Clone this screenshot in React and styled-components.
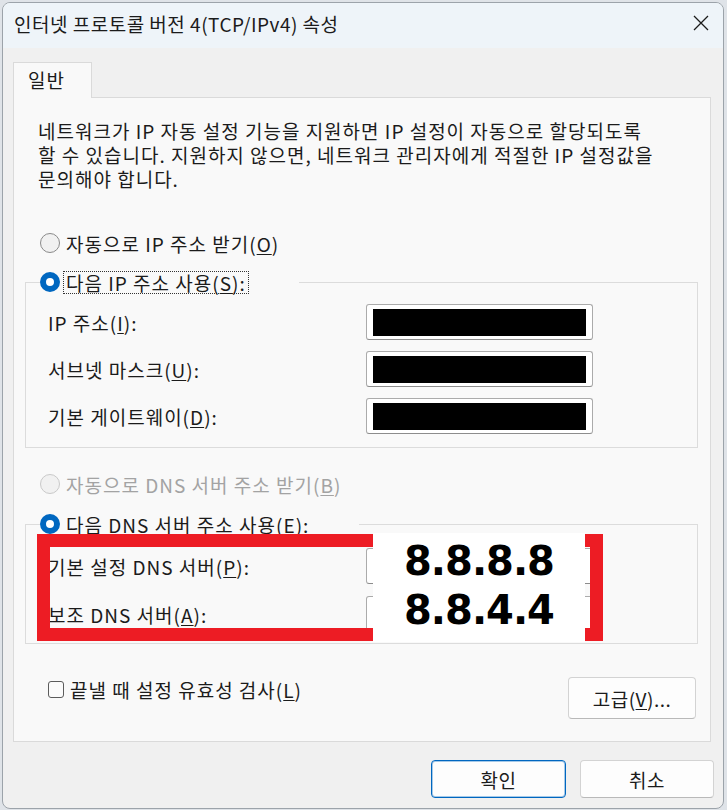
import styled, { createGlobalStyle } from "styled-components";

const GlobalStyle = createGlobalStyle`
  html, body { margin: 0; padding: 0; background: #dfe3e8; }
  body { font-family: "Noto Sans CJK KR", "Noto Sans", sans-serif; color: #1b1b1b; }
  * { box-sizing: border-box; }
  u { text-decoration-thickness: 1px; text-underline-offset: 2px; }
`;

const Window = styled.div`
  margin: 2px 0 0 2px; width: 722px;
  background: #f0f0f0; border: 1px solid #9ca3aa; border-radius: 8px; overflow: hidden;
`;
const TitleBar = styled.div`
  height: 45px; background: #eef4f9;
  display: flex; align-items: center; justify-content: space-between;
  padding: 0 14px 5px 11px;
  font-size: 19px; letter-spacing: 0.5px;
`;
const Body = styled.div`padding: 14px 12px 0 10px;`;
const Tab = styled.div`
  position: relative; z-index: 1;
  width: 79px; height: 36px; margin-bottom: -1px;
  background: #f9f9f9; border: 1px solid #dadada; border-bottom: none;
  padding: 3px 0 0 14px; font-size: 19px; letter-spacing: 1px;
`;
const Panel = styled.div`
  background: #f9f9f9; border: 1px solid #dadada;
  padding: 21px 12px 22px 11px;
  font-size: 19px; letter-spacing: 1px;
`;
const Para = styled.div`padding-left: 13px;`;
const Line = styled.div`height: 24px; line-height: 24px; white-space: nowrap;`;
const OptionRow = styled.div`
  display: flex; align-items: center; gap: 6px;
  height: 24px; margin-top: ${({ $mt }) => $mt}px; padding-left: 15px;
  color: ${({ $disabled }) => ($disabled ? "#a3a3a3" : "inherit")};
`;
const Radio = styled.span`
  flex: none; width: 20px; height: 20px; border-radius: 50%;
  background: ${({ $on }) => ($on ? "#fff" : "#f1f1f1")};
  border: ${({ $on, $disabled }) =>
    $on ? "6px solid #0067c0" : $disabled ? "1px solid #c9c9c9" : "1.5px solid #8a8a8a"};
`;
const Focus = styled.span`
  border: 1px dotted #333; padding: 0 2px; margin-left: -3px; line-height: 21px;
`;
const Group = styled.fieldset`
  margin: ${({ $mt }) => $mt}px 0 0; padding: 0; min-inline-size: 0;
  border: 1px solid #dcdcdc;
`;
const Legend = styled.legend`
  margin-left: 14px; padding: 0 50px 0 0;
  display: flex; align-items: center; gap: 6px; height: 24px;
`;
const FieldGrid = styled.div`
  position: relative;
  display: grid; grid-template-columns: 318px 227px; align-items: center;
  row-gap: ${({ $gap }) => $gap}px;
  padding: ${({ $pt }) => $pt}px 0 ${({ $pb }) => $pb}px 22px;
`;
const Input = styled.div`
  width: 227px; height: 36px; background: #fff;
  border: 1px solid #ababab; border-bottom-color: #8c8c8c; border-radius: 3px;
  padding: 4px 6px 3px 6px;
`;
const Redacted = styled.div`width: 100%; height: 100%; background: #000;`;
const Highlight = styled.div`
  position: absolute; left: 11px; top: -2px; width: 566px; height: 107px;
  border: 13px solid #ed1c24;
`;
const DnsNote = styled.div`
  position: absolute; left: 347px; top: -3px; width: 212px; height: 109px;
  background: #fff; padding-top: 4px; text-align: center;
  font-family: "DejaVu Sans", sans-serif; font-weight: 700; font-size: 40px;
  line-height: 49px; letter-spacing: -1px; color: #000;
`;
const BottomRow = styled.div`
  display: flex; align-items: flex-start; justify-content: space-between;
  margin-top: 33px; padding: 0 2px 0 23px;
`;
const Check = styled.label`display: flex; align-items: center; gap: 6px; margin-top: -1px;`;
const Box = styled.span`
  width: 16px; height: 17px; border: 1px solid #5c5c5c; border-radius: 3px; background: #fbfbfb;
`;
const Button = styled.button`
  width: ${({ $w }) => $w}px; height: ${({ $h = 38 }) => $h}px;
  font-family: inherit; font-size: 19px; color: #1b1b1b; letter-spacing: 0.5px;
  background: #fdfdfd; border-radius: 4px; padding: 0;
  border: 1px solid ${({ $primary }) => ($primary ? "#0067c0" : "#d3d3d3")};
  border-bottom-color: ${({ $primary }) => ($primary ? "#0067c0" : "#b9b9b9")};
  box-shadow: ${({ $primary }) => ($primary ? "inset 0 0 0 1px rgba(0,103,192,0.35)" : "none")};
`;
const Footer = styled.div`
  display: flex; justify-content: flex-end; gap: 14px;
  padding: 18px 9px 10px;
`;

export default function App() {
  return (
    <>
      <GlobalStyle />
      <Window>
        <TitleBar>
          <span>인터넷 프로토콜 버전 4(TCP/IPv4) 속성</span>
          <svg width="16" height="16" viewBox="0 0 16 16">
            <path d="M1 1 L15 15 M15 1 L1 15" stroke="#1b1b1b" strokeWidth="1.3" />
          </svg>
        </TitleBar>
        <Body>
          <Tab>일반</Tab>
          <Panel>
            <Para>
              <Line>네트워크가 IP 자동 설정 기능을 지원하면 IP 설정이 자동으로 할당되도록</Line>
              <Line>할 수 있습니다. 지원하지 않으면, 네트워크 관리자에게 적절한 IP 설정값을</Line>
              <Line>문의해야 합니다.</Line>
            </Para>

            <OptionRow $mt={40}>
              <Radio />
              <span>자동으로 IP 주소 받기(<u>O</u>)</span>
            </OptionRow>

            <Group $mt={15}>
              <Legend>
                <Radio $on />
                <Focus>다음 IP 주소 사용(<u>S</u>):</Focus>
              </Legend>
              <FieldGrid $gap={11} $pt={10} $pb={13}>
                <span>IP 주소(<u>I</u>):</span>
                <Input><Redacted /></Input>
                <span>서브넷 마스크(<u>U</u>):</span>
                <Input><Redacted /></Input>
                <span>기본 게이트웨이(<u>D</u>):</span>
                <Input><Redacted /></Input>
              </FieldGrid>
            </Group>

            <OptionRow $mt={24} $disabled>
              <Radio $disabled />
              <span>자동으로 DNS 서버 주소 받기(<u>B</u>)</span>
            </OptionRow>

            <Group $mt={16}>
              <Legend>
                <Radio $on />
                <span>다음 DNS 서버 주소 사용(<u>E</u>):</span>
              </Legend>
              <FieldGrid $gap={12} $pt={12} $pb={11}>
                <span>기본 설정 DNS 서버(<u>P</u>):</span>
                <Input />
                <span>보조 DNS 서버(<u>A</u>):</span>
                <Input />
                <Highlight />
                <DnsNote>8.8.8.8<br />8.8.4.4</DnsNote>
              </FieldGrid>
            </Group>

            <BottomRow>
              <Check>
                <Box />
                <span>끝낼 때 설정 유효성 검사(<u>L</u>)</span>
              </Check>
              <Button $w={128} $h={42}>고급(<u>V</u>)...</Button>
            </BottomRow>
          </Panel>
        </Body>
        <Footer>
          <Button $w={135} $primary>확인</Button>
          <Button $w={134}>취소</Button>
        </Footer>
      </Window>
    </>
  );
}
